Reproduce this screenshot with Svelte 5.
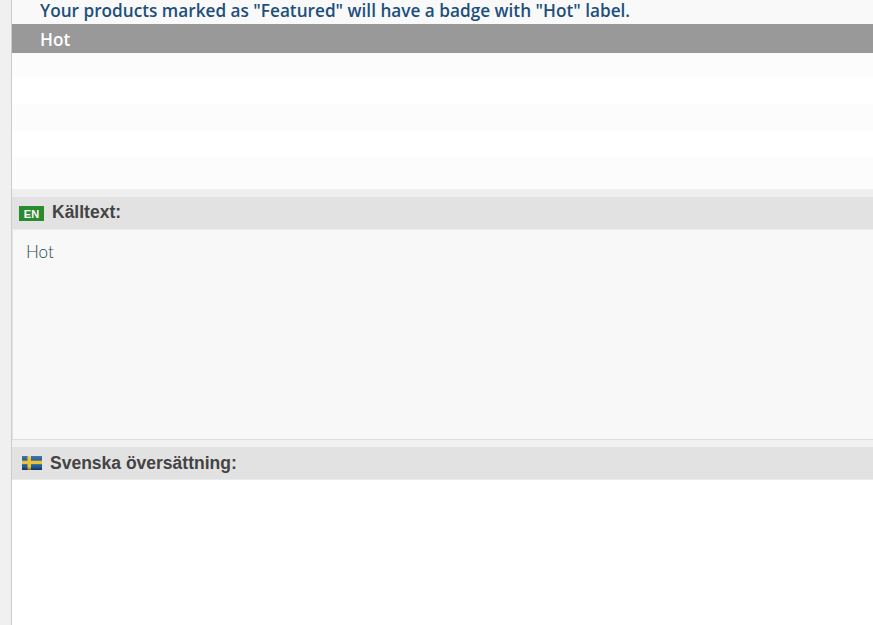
<script>
  const rows = [24, 27, 27, 27, 31];
</script>

<div class="page">
  <aside class="rail"></aside>
  <main class="content">
    <div class="context">Your products marked as "Featured" will have a badge with "Hot" label.</div>
    <div class="selected">Hot</div>
    <div class="rows">
      {#each rows as h}
        <div class="row" style="height: {h}px"></div>
      {/each}
    </div>
    <div class="gap"></div>
    <div class="head">
      <span class="badge">EN</span>
      <span class="title source-title">Källtext:</span>
    </div>
    <div class="source">Hot</div>
    <div class="gap second"></div>
    <div class="head target">
      <svg class="flag" width="20" height="14" viewBox="0 0 20 14">
        <defs>
          <linearGradient id="shade" x1="0" y1="0" x2="0" y2="1">
            <stop offset="0" stop-color="#fff" stop-opacity="0.15" />
            <stop offset="0.75" stop-color="#000" stop-opacity="0" />
            <stop offset="1" stop-color="#000" stop-opacity="0.45" />
          </linearGradient>
        </defs>
        <rect width="20" height="14" fill="#1f5f9e" />
        <rect x="5.5" width="3.5" height="14" fill="#f4c832" />
        <rect y="4.7" width="20" height="3.5" fill="#f4c832" />
        <rect width="20" height="14" fill="url(#shade)" />
      </svg>
      <span class="title">Svenska översättning:</span>
    </div>
    <div class="editor"></div>
  </main>
</div>

<style>
  :global(body) {
    background: #fff;
    overflow: hidden;
  }
  .page {
    display: flex;
    height: 625px;
  }
  .rail {
    width: 11px;
    flex: none;
    background: #f0f0f0;
    border-right: 1px solid #ccc;
  }
  .content {
    flex: 1;
    min-width: 0;
    display: flex;
    flex-direction: column;
  }
  .context {
    height: 24px;
    box-sizing: border-box;
    padding-left: 28px;
    background: #f9f9f9;
    color: #1d4f7c;
    font: 600 17.2px/22px "Open Sans", sans-serif;
    white-space: nowrap;
  }
  .selected {
    height: 29px;
    box-sizing: border-box;
    padding-left: 28px;
    background: #999;
    color: #fff;
    font: 600 17.2px/31px "Open Sans", sans-serif;
  }
  .row:nth-child(odd) {
    background: #fcfcfc;
  }
  .gap {
    height: 8px;
    background: #eee;
  }
  .gap.second {
    background: #f1f1f1;
    border-top: 1px solid #ddd;
    box-sizing: border-box;
  }
  .head {
    height: 33px;
    box-sizing: border-box;
    display: flex;
    align-items: center;
    gap: 8px;
    padding-left: 7px;
    background: #e2e2e2;
    border-bottom: 1px solid #ebebeb;
  }
  .head.target {
    padding-left: 10px;
  }
  .badge {
    width: 25px;
    height: 15px;
    margin-top: 1px;
    background: #2a8a2e;
    color: #fff;
    font: 700 11px/16px "Liberation Sans", sans-serif;
    text-align: center;
  }
  .title {
    color: #444;
    font: 700 17.5px/20px "Liberation Sans", sans-serif;
  }
  .source-title {
    margin-bottom: 3px;
  }
  .source {
    height: 209px;
    box-sizing: border-box;
    padding: 10px 13px;
    background: #f8f8f8;
    border-left: 1px solid #e4e4e4;
    color: #1c4a50;
    font: 300 17px/24px Lato, sans-serif;
  }
  .editor {
    flex: 1;
    background: #fff;
  }
</style>
